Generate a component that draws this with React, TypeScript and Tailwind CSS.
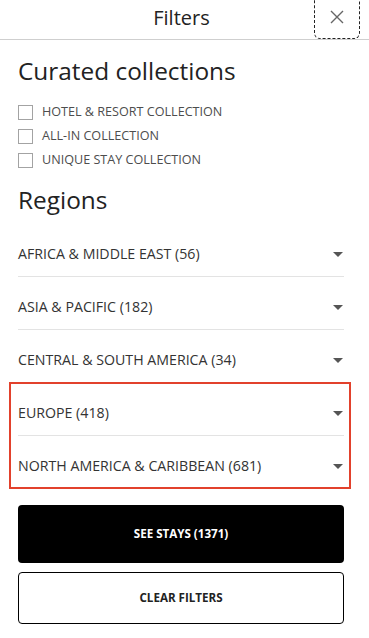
import React from 'react';

const collections = ['HOTEL & RESORT COLLECTION', 'ALL-IN COLLECTION', 'UNIQUE STAY COLLECTION'];

const regions = [
  { name: 'AFRICA & MIDDLE EAST', count: 56 },
  { name: 'ASIA & PACIFIC', count: 182 },
  { name: 'CENTRAL & SOUTH AMERICA', count: 34 },
];

const highlighted = [
  { name: 'EUROPE', count: 418 },
  { name: 'NORTH AMERICA & CARIBBEAN', count: 681 },
];

const Caret = () => (
  <svg width="10" height="5" viewBox="0 0 10 5" className="shrink-0">
    <polygon points="0,0 10,0 5,5" fill="#555" />
  </svg>
);

const RegionRow = ({ name, count }: { name: string; count: number }) => (
  <div className="h-[53px] border-b border-[#e3e3e3] pt-[20px] pr-[1px] flex items-start justify-between">
    <span className="text-[14.2px] leading-5 text-[#333]">
      {name} ({count})
    </span>
    <div className="h-5 flex items-center">
      <Caret />
    </div>
  </div>
);

export default function App() {
  return (
    <div className="w-[369px] h-[638px] bg-white overflow-hidden relative font-['Open_Sans',sans-serif]">
      {/* header */}
      <div className="relative h-[40px] border-b border-[#cfcfcf] flex items-center justify-center pr-[6px]">
        <span className="text-[20px] text-[#222] leading-none pb-[3px]">Filters</span>
        <button className="absolute right-[9px] -top-[7px] h-[46px] w-[46px] border border-dashed border-[#222] rounded-b-[6px] flex items-center justify-center pt-[2px] bg-white">
          <svg width="14" height="14" viewBox="0 0 14 14">
            <path d="M1 1 L13 13 M13 1 L1 13" stroke="#666" strokeWidth="1.4" fill="none" />
          </svg>
        </button>
      </div>

      <div className="pl-[18px] pr-[25px]">
        <h2 className="mt-[15px] text-[24.4px] leading-8 text-[#222]">Curated collections</h2>

        <div className="mt-[13px]">
          {collections.map(c => (
            <label key={c} className="h-[24px] flex items-center gap-[9px]">
              <span className="w-[15px] h-[15px] border border-[#a3a3a3] bg-white shrink-0" />
              <span className="text-[12.6px] text-[#4d4d4d] leading-none">{c}</span>
            </label>
          ))}
        </div>

        <h2 className="mt-[12px] text-[24.4px] leading-8 text-[#222]">Regions</h2>

        <div className="mt-[8px]">
          {regions.map(r => (
            <RegionRow key={r.name} {...r} />
          ))}
          <div className="relative">
            {highlighted.map(r => (
              <RegionRow key={r.name} {...r} />
            ))}
            <div className="absolute -left-[9px] -right-[7px] -top-[1px] bottom-0 border-[2.5px] border-[#e2412c] pointer-events-none" />
          </div>
        </div>

        <button className="mt-[16px] w-full h-[58px] bg-black rounded-[4px] text-white text-[11.6px] font-bold">
          SEE STAYS (1371)
        </button>
        <button className="mt-[9px] w-full h-[52px] bg-white border border-black rounded-[4px] text-[#222] text-[11.6px] font-bold">
          CLEAR FILTERS
        </button>
      </div>
    </div>
  );
}
